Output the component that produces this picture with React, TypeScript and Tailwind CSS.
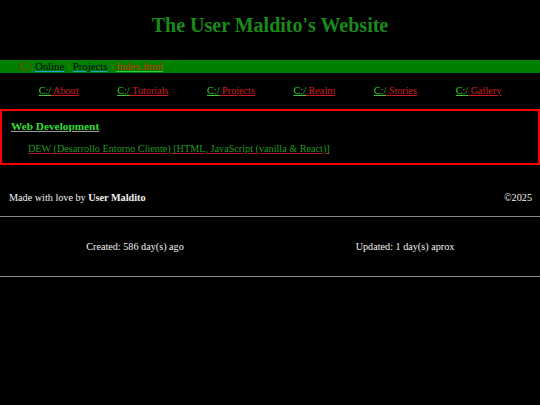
const navItems = ['About', 'Tutorials', 'Projects', 'Realm', 'Stories', 'Gallery'];

function NavLink({ label }: { label: string }) {
  return (
    <a href="#" className="whitespace-nowrap">
      <span className="text-[#33cc33] underline decoration-[#33cc33]">C:/</span>
      <span className="text-[#cc1f1f] underline decoration-[#cc1f1f]"> {label}</span>
    </a>
  );
}

export default function App() {
  return (
    <div className="min-h-[405px] bg-black text-[#f2f2f2] text-[10.2px] leading-[13px] font-['Liberation_Serif','Times_New_Roman',serif]">
      <header className="h-[50px] flex items-center justify-center">
        <h1 className="text-[20px] font-bold text-[#1a8a1a]">The User Maldito's Website</h1>
      </header>

      <div className="mt-[10px] h-[13px] bg-[#008000] pl-[19px] flex items-center text-[10.8px] whitespace-pre">
        <span className="text-[#9a3000]">C:\ </span>
        <a href="#" className="text-black underline decoration-[#1ea0d0]">Online</a>
        <span className="text-[#c05000]"> \ </span>
        <a href="#" className="text-black underline decoration-[#1ea0d0]">Projects</a>
        <span className="text-[#c05000]"> \ </span>
        <a href="#" className="text-[#d23000] underline decoration-[#33cc33]">Index.html</a>
      </div>

      <nav className="mt-[11px] h-[12px] flex items-center justify-evenly">
        {navItems.map((item) => (
          <NavLink key={item} label={item} />
        ))}
      </nav>

      <section className="mt-[13px] h-[56px] border-2 border-[#ff0000] px-[9px] pt-[9px]">
        <h3 className="text-[11.3px] font-bold text-[#33dd33] underline decoration-[#999999]">
          Web Development
        </h3>
        <div className="mt-[9px] pl-[17px]">
          <a href="#" className="text-[#1f9a1f] underline decoration-[#b01818]">
            DEW (Desarrollo Entorno Cliente) [HTML, JavaScript (vanilla &amp; React)]
          </a>
        </div>
      </section>

      <footer className="mt-[26px]">
        <div className="flex justify-between px-[9px] pr-[8px]">
          <p>
            Made with love by <b>User Maldito</b>
          </p>
          <p>©2025</p>
        </div>
        <hr className="mt-[12px] border-t border-[#888888]" />
        <div className="h-[59px] flex items-center">
          <p className="flex-1 text-center">Created: 586 day(s) ago</p>
          <p className="flex-1 text-center">Updated: 1 day(s) aprox</p>
        </div>
        <hr className="border-t border-[#888888]" />
      </footer>
    </div>
  );
}
